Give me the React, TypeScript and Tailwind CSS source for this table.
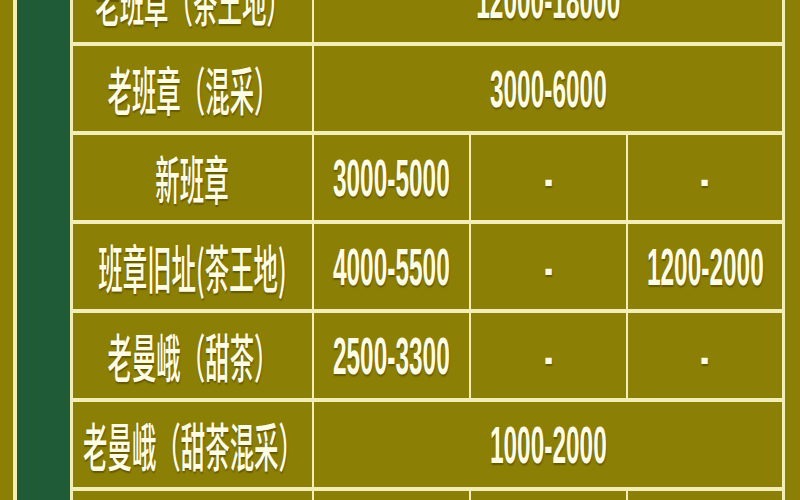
import React from 'react'

type Row = { name: string; span?: string; cells?: string[] }

const rows: Row[] = [
  { name: '老班章（茶王地）', span: '12000-18000' },
  { name: '老班章（混采）', span: '3000-6000' },
  { name: '新班章', cells: ['3000-5000', '-', '-'] },
  { name: '班章旧址(茶王地)', cells: ['4000-5500', '-', '1200-2000'] },
  { name: '老曼峨（甜茶）', cells: ['2500-3300', '-', '-'] },
  { name: '老曼峨（甜茶混采）', span: '1000-2000' },
  { name: '', cells: ['', '', ''] },
]

export default function App() {
  return (
    <div className="w-[800px] h-[500px] overflow-hidden bg-[#8b7f06] flex">
      {/* left strip */}
      <div className="w-[13px] shrink-0" />
      <div className="w-[4px] shrink-0 bg-[#f3eeb5]" />
      <div className="w-[53px] shrink-0 bg-[#1f5b36]" />

      {/* price table */}
      <div className="-mt-[43px] shrink-0 self-start grid grid-cols-[239px_155px_155px_154px] auto-rows-[85px] gap-x-[2px] gap-y-[4px] bg-[#f3eeb5] border-x-[3px] border-[#f3eeb5]">
        {rows.map((r, i) => (
          <React.Fragment key={i}>
            <Cell text={r.name} cjk />
            {r.span !== undefined ? (
              <Cell text={r.span} wide />
            ) : (
              r.cells!.map((c, j) => <Cell key={j} text={c} />)
            )}
          </React.Fragment>
        ))}
      </div>
    </div>
  )
}

function Cell({ text, cjk = false, wide = false }: { text: string; cjk?: boolean; wide?: boolean }) {
  return (
    <div
      className={`bg-[#8b7f06] flex items-center justify-center ${wide ? 'col-span-3' : ''}`}
    >
      <span
        className={`shrink-0 inline-block whitespace-nowrap text-[52px] leading-none text-[#fffce4] scale-x-[0.47] [text-shadow:1px_2px_2px_rgba(40,30,0,0.4)] ${
          cjk
            ? "font-medium font-['Noto_Sans_CJK_SC',sans-serif]"
            : "font-bold font-['Liberation_Sans',Arial,sans-serif]"
        }`}
      >
        {text}
      </span>
    </div>
  )
}
